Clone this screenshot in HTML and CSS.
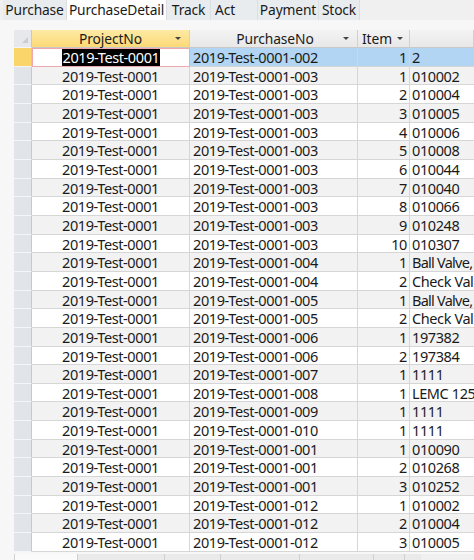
FILE: index.html
```html
<!DOCTYPE html>
<html>
<head>
<meta charset="utf-8">
<link rel="stylesheet" href="styles.css">
</head>
<body>
<div class="app">
  <div class="tabs">
    <div class="tab t1">Purchase</div>
    <div class="tab t2 active">PurchaseDetail</div>
    <div class="tab t3">Track</div>
    <div class="tab t4">Act</div>
    <div class="tab t5">Payment</div>
    <div class="tab t6">Stock</div>
  </div>
  <div class="body">
    <div class="grid">
      <div class="row head">
        <div class="cell sel corner"><span class="tri"></span></div>
        <div class="cell c1 hcur">ProjectNo<span class="arrow"></span></div>
        <div class="cell c2">PurchaseNo<span class="arrow"></span></div>
        <div class="cell c3">Item<span class="arrow item"></span></div>
        <div class="cell c4"></div>
      </div>
      <div class="row current">
        <div class="cell sel"></div>
        <div class="cell c1 focus"><span class="mark">2019-Test-0001</span></div>
        <div class="cell c2">2019-Test-0001-002</div>
        <div class="cell c3">1</div>
        <div class="cell c4">2</div>
      </div>
      <div class="row alt"><div class="cell sel"></div><div class="cell c1">2019-Test-0001</div><div class="cell c2">2019-Test-0001-003</div><div class="cell c3">1</div><div class="cell c4">010002</div></div>
      <div class="row"><div class="cell sel"></div><div class="cell c1">2019-Test-0001</div><div class="cell c2">2019-Test-0001-003</div><div class="cell c3">2</div><div class="cell c4">010004</div></div>
      <div class="row alt"><div class="cell sel"></div><div class="cell c1">2019-Test-0001</div><div class="cell c2">2019-Test-0001-003</div><div class="cell c3">3</div><div class="cell c4">010005</div></div>
      <div class="row"><div class="cell sel"></div><div class="cell c1">2019-Test-0001</div><div class="cell c2">2019-Test-0001-003</div><div class="cell c3">4</div><div class="cell c4">010006</div></div>
      <div class="row alt"><div class="cell sel"></div><div class="cell c1">2019-Test-0001</div><div class="cell c2">2019-Test-0001-003</div><div class="cell c3">5</div><div class="cell c4">010008</div></div>
      <div class="row"><div class="cell sel"></div><div class="cell c1">2019-Test-0001</div><div class="cell c2">2019-Test-0001-003</div><div class="cell c3">6</div><div class="cell c4">010044</div></div>
      <div class="row alt"><div class="cell sel"></div><div class="cell c1">2019-Test-0001</div><div class="cell c2">2019-Test-0001-003</div><div class="cell c3">7</div><div class="cell c4">010040</div></div>
      <div class="row"><div class="cell sel"></div><div class="cell c1">2019-Test-0001</div><div class="cell c2">2019-Test-0001-003</div><div class="cell c3">8</div><div class="cell c4">010066</div></div>
      <div class="row alt"><div class="cell sel"></div><div class="cell c1">2019-Test-0001</div><div class="cell c2">2019-Test-0001-003</div><div class="cell c3">9</div><div class="cell c4">010248</div></div>
      <div class="row"><div class="cell sel"></div><div class="cell c1">2019-Test-0001</div><div class="cell c2">2019-Test-0001-003</div><div class="cell c3">10</div><div class="cell c4">010307</div></div>
      <div class="row alt"><div class="cell sel"></div><div class="cell c1">2019-Test-0001</div><div class="cell c2">2019-Test-0001-004</div><div class="cell c3">1</div><div class="cell c4 tight">Ball Valve,</div></div>
      <div class="row"><div class="cell sel"></div><div class="cell c1">2019-Test-0001</div><div class="cell c2">2019-Test-0001-004</div><div class="cell c3">2</div><div class="cell c4">Check Val</div></div>
      <div class="row alt"><div class="cell sel"></div><div class="cell c1">2019-Test-0001</div><div class="cell c2">2019-Test-0001-005</div><div class="cell c3">1</div><div class="cell c4 tight">Ball Valve,</div></div>
      <div class="row"><div class="cell sel"></div><div class="cell c1">2019-Test-0001</div><div class="cell c2">2019-Test-0001-005</div><div class="cell c3">2</div><div class="cell c4">Check Val</div></div>
      <div class="row alt"><div class="cell sel"></div><div class="cell c1">2019-Test-0001</div><div class="cell c2">2019-Test-0001-006</div><div class="cell c3">1</div><div class="cell c4">197382</div></div>
      <div class="row"><div class="cell sel"></div><div class="cell c1">2019-Test-0001</div><div class="cell c2">2019-Test-0001-006</div><div class="cell c3">2</div><div class="cell c4">197384</div></div>
      <div class="row alt"><div class="cell sel"></div><div class="cell c1">2019-Test-0001</div><div class="cell c2">2019-Test-0001-007</div><div class="cell c3">1</div><div class="cell c4">1111</div></div>
      <div class="row"><div class="cell sel"></div><div class="cell c1">2019-Test-0001</div><div class="cell c2">2019-Test-0001-008</div><div class="cell c3">1</div><div class="cell c4">LEMC 125</div></div>
      <div class="row alt"><div class="cell sel"></div><div class="cell c1">2019-Test-0001</div><div class="cell c2">2019-Test-0001-009</div><div class="cell c3">1</div><div class="cell c4">1111</div></div>
      <div class="row"><div class="cell sel"></div><div class="cell c1">2019-Test-0001</div><div class="cell c2">2019-Test-0001-010</div><div class="cell c3">1</div><div class="cell c4">1111</div></div>
      <div class="row alt"><div class="cell sel"></div><div class="cell c1">2019-Test-0001</div><div class="cell c2">2019-Test-0001-001</div><div class="cell c3">1</div><div class="cell c4">010090</div></div>
      <div class="row"><div class="cell sel"></div><div class="cell c1">2019-Test-0001</div><div class="cell c2">2019-Test-0001-001</div><div class="cell c3">2</div><div class="cell c4">010268</div></div>
      <div class="row alt"><div class="cell sel"></div><div class="cell c1">2019-Test-0001</div><div class="cell c2">2019-Test-0001-001</div><div class="cell c3">3</div><div class="cell c4">010252</div></div>
      <div class="row"><div class="cell sel"></div><div class="cell c1">2019-Test-0001</div><div class="cell c2">2019-Test-0001-012</div><div class="cell c3">1</div><div class="cell c4">010002</div></div>
      <div class="row alt"><div class="cell sel"></div><div class="cell c1">2019-Test-0001</div><div class="cell c2">2019-Test-0001-012</div><div class="cell c3">2</div><div class="cell c4">010004</div></div>
      <div class="row"><div class="cell sel"></div><div class="cell c1">2019-Test-0001</div><div class="cell c2">2019-Test-0001-012</div><div class="cell c3">3</div><div class="cell c4">010005</div></div>
    </div>
    <div class="nav">
      <div class="seg s1"></div>
      <div class="seg s2"></div>
      <div class="seg s3"></div>
      <div class="seg s4"></div>
      <div class="seg s5"></div>
      <div class="seg s6"></div>
      <div class="seg s7"></div>
    </div>
  </div>
</div>
</body>
</html>
```

FILE: styles.css
```css
html, body {
  margin: 0;
  padding: 0;
}
body {
  font-family: "Noto Sans", "Open Sans", sans-serif;
  color: #1a1a1a;
  background: #f7f7f7;
}
.app {
  width: 474px;
  height: 560px;
  overflow: hidden;
  display: flex;
  flex-direction: column;
}
.tabs {
  height: 20px;
  flex: none;
  display: flex;
  padding-left: 3px;
  background: #f0f0f0;
}
.tab {
  box-sizing: border-box;
  height: 20px;
  line-height: 19px;
  font-size: 13.8px;
  letter-spacing: -0.15px;
  text-align: center;
  background: #e9ecef;
  border-right: 1px solid #dcdfe2;
  white-space: nowrap;
}
.tab.active {
  background: #ffffff;
}
.t1 { width: 64px; }
.t2 { width: 100px; }
.t3 { width: 44px; }
.t4 { width: 47px; text-align: left; padding-left: 4px; }
.t5 { width: 61px; }
.t6 { width: 41px; }
.body {
  flex: 1;
  display: flex;
  flex-direction: column;
  padding: 10px 0 0 14px;
  background: #f7f7f7;
  min-height: 0;
}
.grid {
  display: flex;
  flex-direction: column;
  font-size: 14.5px;
  letter-spacing: -0.4px;
}
.row {
  display: grid;
  grid-template-columns: 18px 158px 168px 52px minmax(0, 1fr);
  height: 18.67px;
  background: #ffffff;
}
.row.alt {
  background: #f2f2f2;
}
.row.head {
  height: 18px;
  background: #ededed;
  font-size: 13.8px;
  letter-spacing: -0.1px;
}
.cell {
  box-sizing: border-box;
  border-right: 1px solid #d6d6d6;
  border-bottom: 1px solid #d6d6d6;
  white-space: nowrap;
  overflow: hidden;
  line-height: 18px;
  position: relative;
}
.head .cell {
  overflow: visible;
  line-height: 17px;
  border-bottom: 1px solid #c8c8c8;
  border-right: 1px solid #d0d0d0;
  background: linear-gradient(#f3f3f3, #e8e8e8);
}
.head .cell.hcur {
  background: linear-gradient(#fdeaa4, #fcd977);
}
.head .c1, .head .c2 {
  text-align: center;
}
.head .c3 {
  text-align: left;
  padding-left: 4px;
}
.cell.sel {
  background: #e1e5ea;
  border-right: 1px solid #c4c9cf;
  border-bottom: 1px solid #f4f5f7;
}
.current .cell.sel {
  background: #f9d56a;
}
.head .corner {
  background: #e6e8eb;
}
.tri {
  position: absolute;
  right: 3px;
  bottom: 4px;
  width: 0;
  height: 0;
  border-left: 6px solid transparent;
  border-bottom: 6px solid #c9cdd2;
}
.arrow {
  position: absolute;
  top: 7px;
  right: 8px;
  width: 0;
  height: 0;
  border-left: 3px solid transparent;
  border-right: 3px solid transparent;
  border-top: 3px solid #444;
}
.arrow.item {
  right: 6px;
}
.c1 {
  text-align: center;
}
.c2 {
  padding-left: 3px;
}
.c3 {
  text-align: right;
  padding-right: 2px;
}
.c4 {
  padding-left: 2px;
  border-right: none;
}
.c4.tight {
  letter-spacing: -0.75px;
}
.current .cell {
  background: #b1d5f2;
}
.current .cell.focus {
  background: #ffffff;
  border: 1px solid #eda8b0;
  line-height: 16px;
}
.mark {
  background: #000000;
  color: #ffffff;
  padding: 1px 1px;
}
.nav {
  margin-top: 2px;
  flex: 1;
  display: flex;
  background: #f0f0f0;
}
.seg {
  height: 100%;
  border-left: 1px solid #d0d0d0;
  background: #eaeaea;
}
.s1 { width: 62px; background: #fafafa; }
.s2 { width: 86px; }
.s3 { width: 55px; }
.s4 { width: 78px; }
.s5 { width: 73px; }
.s6 { width: 30px; }
.s7 { width: 16px; }
```
